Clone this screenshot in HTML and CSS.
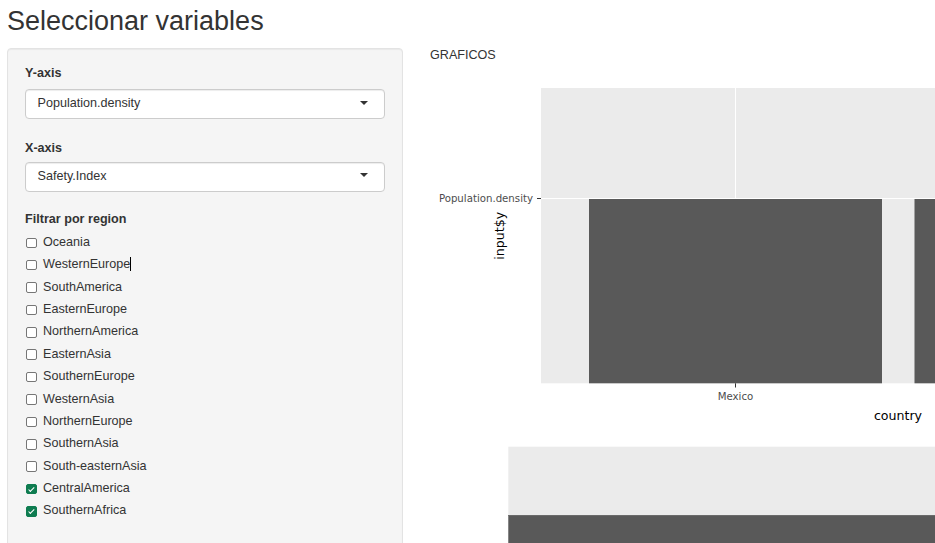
FILE: index.html
```html
<!DOCTYPE html>
<html lang="es">
<head>
<meta charset="utf-8">
<title>Seleccionar variables</title>
<link rel="stylesheet" href="styles.css">
</head>
<body>
<div class="page">
  <h2 class="title">Seleccionar variables</h2>
  <div class="layout">
    <div class="well">
      <div class="form-group fg-y">
        <label class="control-label">Y-axis</label>
        <div class="select"><span>Population.density</span><span class="caret"></span></div>
      </div>
      <div class="form-group fg-x">
        <label class="control-label">X-axis</label>
        <div class="select"><span>Safety.Index</span><span class="caret"></span></div>
      </div>
      <div class="form-group fg-region">
        <label class="control-label">Filtrar por region</label>
        <div class="checks">
          <label class="checkbox"><input type="checkbox"><span>Oceania</span></label>
          <label class="checkbox"><input type="checkbox"><span>WesternEurope<span class="ibeam"></span></span></label>
          <label class="checkbox"><input type="checkbox"><span>SouthAmerica</span></label>
          <label class="checkbox"><input type="checkbox"><span>EasternEurope</span></label>
          <label class="checkbox"><input type="checkbox"><span>NorthernAmerica</span></label>
          <label class="checkbox"><input type="checkbox"><span>EasternAsia</span></label>
          <label class="checkbox"><input type="checkbox"><span>SouthernEurope</span></label>
          <label class="checkbox"><input type="checkbox"><span>WesternAsia</span></label>
          <label class="checkbox"><input type="checkbox"><span>NorthernEurope</span></label>
          <label class="checkbox"><input type="checkbox"><span>SouthernAsia</span></label>
          <label class="checkbox"><input type="checkbox"><span>South-easternAsia</span></label>
          <label class="checkbox"><input type="checkbox" checked><span>CentralAmerica</span></label>
          <label class="checkbox"><input type="checkbox" checked><span>SouthernAfrica</span></label>
        </div>
      </div>
    </div>
    <div class="main">
      <div class="main-title">GRAFICOS</div>
      <svg class="plot plot1" width="505" height="367" viewBox="0 0 505 367">
        <rect x="111" y="25" width="714" height="295.3" fill="#ebebeb"/>
        <line x1="111" y1="135.5" x2="825" y2="135.5" stroke="#ffffff" stroke-width="1"/>
        <line x1="305.5" y1="25" x2="305.5" y2="320.3" stroke="#ffffff" stroke-width="1"/>
        <rect x="159" y="136" width="293" height="184.3" fill="#595959"/>
        <rect x="484.5" y="136" width="293" height="184.3" fill="#595959"/>
        <line x1="107" y1="135.5" x2="111" y2="135.5" stroke="#333333" stroke-width="1"/>
        <text class="tick" x="103" y="139.4" text-anchor="end">Population.density</text>
        <line x1="305.5" y1="320.3" x2="305.5" y2="324.5" stroke="#333333" stroke-width="1"/>
        <text class="tick" x="305.5" y="337" text-anchor="middle">Mexico</text>
        <text class="axis-title" x="468" y="356.5" text-anchor="middle">country</text>
        <text class="axis-title" transform="translate(74.3,172.7) rotate(-90)" text-anchor="middle">input$y</text>
      </svg>
      <svg class="plot plot2" width="505" height="113" viewBox="0 0 505 113">
        <rect x="78.3" y="16.7" width="430" height="100" fill="#ebebeb"/>
        <rect x="78.3" y="85" width="430" height="40" fill="#595959"/>
        <line x1="78.3" y1="85.5" x2="505" y2="85.5" stroke="#6a6a6a" stroke-width="1"/>
      </svg>
    </div>
  </div>
</div>
</body>
</html>
```

FILE: styles.css
```css
html, body {
  margin: 0;
  padding: 0;
  background: #ffffff;
}

body {
  font-family: "Liberation Sans", Arial, Helvetica, sans-serif;
  font-size: 12.6px;
  line-height: 18px;
  color: #333333;
}

.page {
  box-sizing: border-box;
  padding-left: 7px;
  width: 935px;
  height: 543px;
  overflow: hidden;
}

.title {
  margin: 7px 0 11.3px 0;
  font-size: 27px;
  line-height: 29.7px;
  font-weight: normal;
  color: #333333;
}

.layout {
  display: flex;
  align-items: flex-start;
  gap: 27px;
}

.well {
  flex: 0 0 396px;
  box-sizing: border-box;
  padding: 15px 17px 60px 17px;
  background: #f5f5f5;
  border: 1px solid #e3e3e3;
  border-radius: 4px;
  box-shadow: inset 0 1px 1px rgba(0, 0, 0, 0.05);
}

.control-label {
  display: block;
  font-weight: bold;
  line-height: 18px;
}

.fg-y { margin-bottom: 19.5px; }
.fg-y .control-label { margin-bottom: 7px; }
.fg-x { margin-bottom: 18.6px; }
.fg-x .control-label { margin-bottom: 5px; }
.fg-region .control-label { margin-bottom: 2.5px; }

.select {
  display: flex;
  align-items: center;
  justify-content: space-between;
  box-sizing: border-box;
  height: 30px;
  padding: 4px 16.5px 6px 11.5px;
  background: #ffffff;
  border: 1px solid #cccccc;
  border-radius: 4px;
  box-shadow: inset 0 1px 1px rgba(0, 0, 0, 0.075);
  color: #333333;
  line-height: 18px;
}

.caret {
  display: inline-block;
  width: 0;
  height: 0;
  margin-top: -1px;
  border-style: solid;
  border-width: 4.5px 4px 0 4px;
  border-color: #333333 transparent transparent transparent;
}

.checks {
  display: flex;
  flex-direction: column;
}

.checkbox {
  display: flex;
  align-items: center;
  height: 22.4px;
  font-weight: normal;
  cursor: pointer;
}

.checkbox input {
  -webkit-appearance: none;
  appearance: none;
  position: relative;
  flex: 0 0 auto;
  box-sizing: border-box;
  width: 10.5px;
  height: 10.5px;
  margin: 2px 6.5px 0 1px;
  border: 1px solid #767676;
  border-radius: 2px;
  background: #ffffff;
}

.checkbox input:checked {
  background: #0e7c50;
  border-color: #0e7c50;
}

.checkbox input:checked::after {
  content: "";
  position: absolute;
  left: 2.8px;
  top: 0.8px;
  width: 2.4px;
  height: 4.6px;
  border: solid #ffffff;
  border-width: 0 1.6px 1.6px 0;
  transform: rotate(45deg);
}

.ibeam {
  display: inline-block;
  width: 1px;
  height: 14.4px;
  margin-left: -0.5px;
  background: #000000;
  vertical-align: -3.3px;
}

.main {
  flex: 0 0 505px;
}

.main-title {
  line-height: 15px;
  color: #333333;
}

.plot {
  display: block;
  overflow: hidden;
}

.tick {
  font-family: "DejaVu Sans", Verdana, sans-serif;
  font-size: 10.2px;
  fill: #4d4d4d;
}

.axis-title {
  font-family: "DejaVu Sans", Verdana, sans-serif;
  font-size: 12.6px;
  fill: #000000;
}
```
